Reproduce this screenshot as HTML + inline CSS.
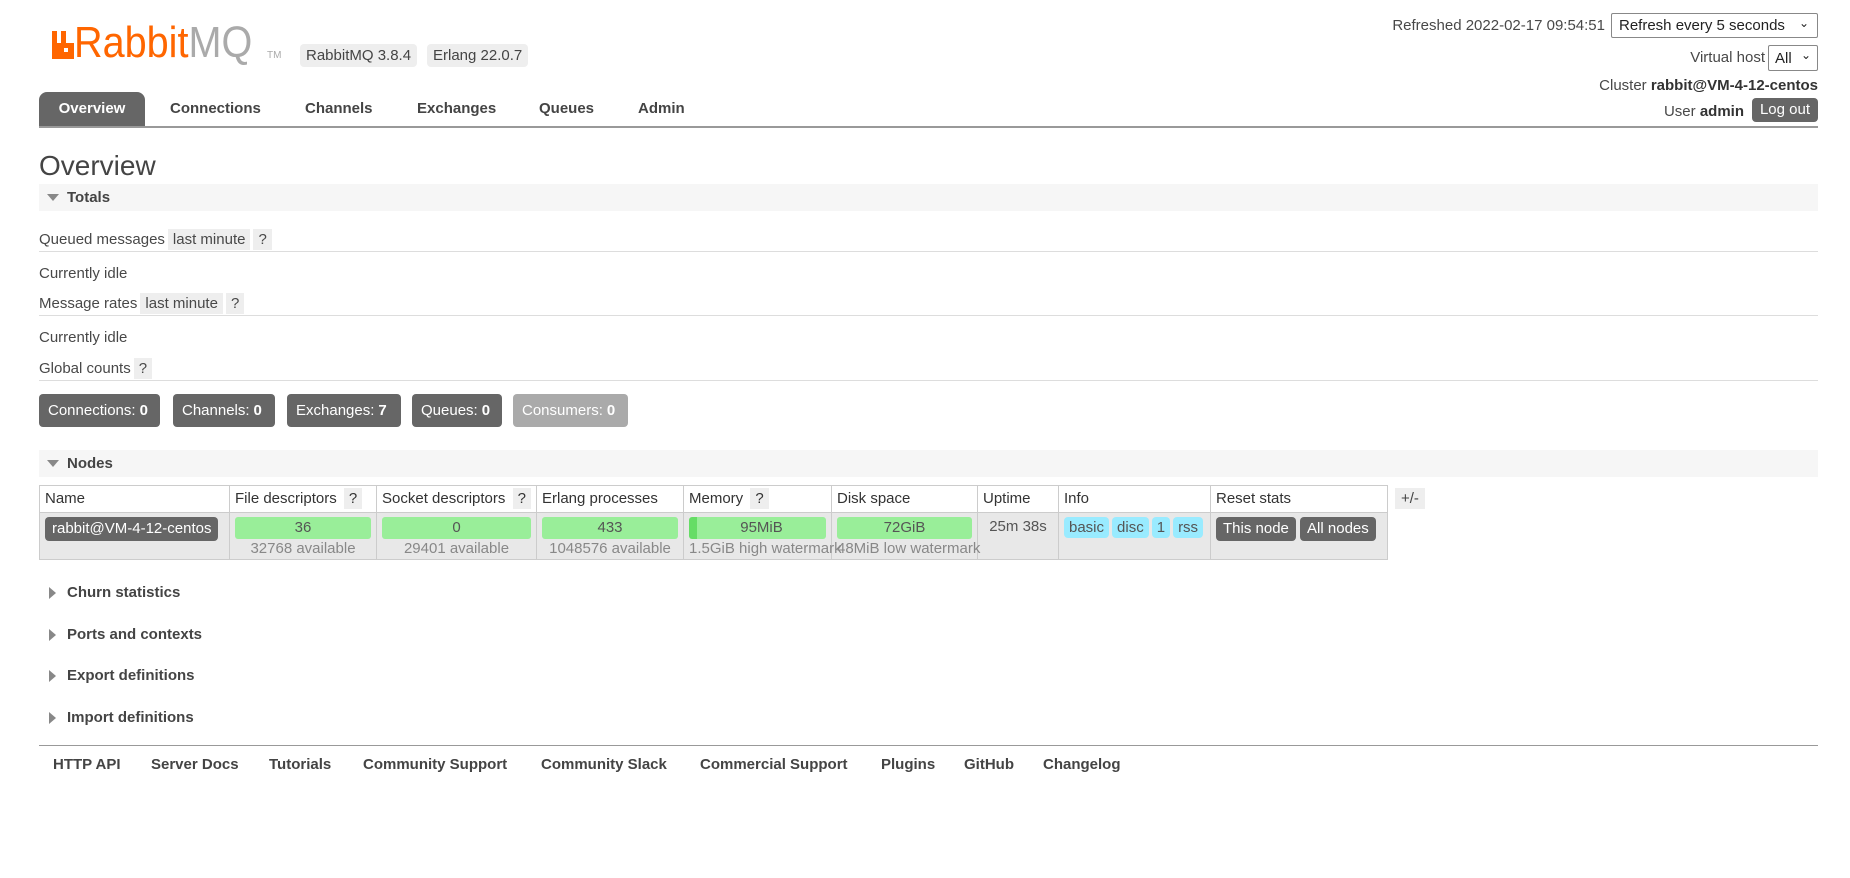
<!DOCTYPE html>
<html><head><meta charset="utf-8"><style>
*{box-sizing:border-box}
body{margin:0;width:1850px;height:878px;background:#fff;font-family:"Liberation Sans",sans-serif;font-size:15px;color:#484848;position:relative;overflow:hidden}
.a{position:absolute;white-space:nowrap}
.badge{background:#eee;border-radius:4px;padding:3px 6px;font-size:15px;color:#444}
.tab{position:absolute;top:92px;height:34px;line-height:34px;font-weight:bold;color:#444;font-size:15px}
.bar{position:absolute;left:39px;width:1779px;background:#f6f6f6;height:27px;line-height:27px;font-weight:bold;font-size:15px;color:#444;padding-left:28px}
.bar:before{content:"";position:absolute;left:8px;top:10px;border-left:6px solid transparent;border-right:6px solid transparent;border-top:7px solid #888}
.sec{position:absolute;left:39px;font-weight:bold;font-size:15px;color:#444;padding-left:28px}
.sec:before{content:"";position:absolute;left:10px;top:3px;border-top:6px solid transparent;border-bottom:6px solid transparent;border-left:7px solid #888}
.hl{position:absolute;left:39px;width:1779px;height:1px;background:#ddd}
.q{background:#eee;padding:2px 5px;margin-left:3px}
.cnt{position:absolute;top:394px;height:33px;line-height:33px;background:#666;color:#fff;border-radius:4px;padding:0 9px;font-size:15px}
.cnt b{margin-left:4px}
table{position:absolute;left:39px;top:485px;width:1348px;border-collapse:collapse;font-size:15px;table-layout:fixed}
td,th{border:1px solid #ccc;padding:0 5px;text-align:left;font-weight:normal;vertical-align:top;white-space:nowrap;overflow:visible}
th{height:26px;line-height:26px;background:#fff;color:#333}
td{background:#e8e8e8;height:47px;text-align:center;color:#555}
.g{background:#99ee99;border-radius:3px;height:22px;line-height:22px;margin-top:4px;color:#555}
.sub{color:#888;font-size:15px;line-height:19px;white-space:nowrap}
.pill{display:inline-block;background:#99ebff;border-radius:4px;padding:0 5px;height:21px;line-height:21px;color:#555;margin-right:3px}
.btn{display:inline-block;background:#666;color:#fff;border-radius:4px;padding:0 7px;height:24px;line-height:24px;margin-top:4px}
.foot{position:absolute;top:756px;font-weight:bold;color:#444;font-size:15px}
</style></head><body>
<div class="a" style="left:52px;top:31px;width:20px;height:26px">
<svg width="22" height="28" viewBox="0 0 22 28"><path d="M0 0h5v12h4V0h5v12h8v16H0z" fill="#f60"/><rect x="12" y="17" width="4" height="4" fill="#fff"/></svg></div>
<div class="a" style="left:74px;top:18px;font-size:44px;color:#f60;font-weight:300;transform:scaleX(0.9);transform-origin:left">Rabbit<span style="color:#aaa">MQ</span></div>
<div class="a" style="left:267px;top:50px;font-size:10px;color:#aaa">TM</div>
<div class="a badge" style="left:300px;top:44px">RabbitMQ 3.8.4</div>
<div class="a badge" style="left:427px;top:44px">Erlang 22.0.7</div>

<div class="tab" style="left:39px;width:106px;background:#666;color:#fff;border-radius:8px 8px 0 0;text-align:center">Overview</div>
<div class="tab" style="left:170px">Connections</div>
<div class="tab" style="left:305px">Channels</div>
<div class="tab" style="left:417px">Exchanges</div>
<div class="tab" style="left:539px">Queues</div>
<div class="tab" style="left:638px">Admin</div>
<div class="a" style="left:39px;top:126px;width:1779px;height:2px;background:#999"></div>

<div class="a" style="right:245px;top:17px">Refreshed 2022-02-17 09:54:51</div>
<div class="a" style="left:1611px;top:13px;width:207px;height:25px;border:1px solid #888;border-radius:2px;padding:3px 7px;color:#222">Refresh every 5 seconds<span style="position:absolute;right:8px;top:2px;font-size:12px">&#8964;</span></div>
<div class="a" style="right:85px;top:49px">Virtual host</div>
<div class="a" style="left:1768px;top:45px;width:50px;height:26px;border:1px solid #888;border-radius:2px;padding:4px 6px;color:#222">All<span style="position:absolute;right:6px;top:2px;font-size:12px">&#8964;</span></div>
<div class="a" style="right:32px;top:77px">Cluster <b style="color:#333">rabbit@VM-4-12-centos</b></div>
<div class="a" style="right:106px;top:103px">User <b style="color:#333">admin</b></div>
<div class="a" style="left:1752px;top:98px;width:66px;height:24px;line-height:24px;background:#666;color:#fff;border-radius:4px;text-align:center">Log out</div>

<div class="a" style="left:39px;top:150px;font-size:28px;color:#444">Overview</div>
<div class="bar" style="top:184px">Totals</div>
<div class="a" style="left:39px;top:231px">Queued messages<span class="q">last minute</span><span class="q">?</span></div>
<div class="hl" style="top:251px"></div>
<div class="a" style="left:39px;top:265px">Currently idle</div>
<div class="a" style="left:39px;top:295px">Message rates<span class="q">last minute</span><span class="q">?</span></div>
<div class="hl" style="top:315px"></div>
<div class="a" style="left:39px;top:329px">Currently idle</div>
<div class="a" style="left:39px;top:360px">Global counts<span class="q">?</span></div>
<div class="hl" style="top:380px"></div>
<div class="cnt" style="left:39px;width:121px">Connections:<b>0</b></div>
<div class="cnt" style="left:173px;width:102px">Channels:<b>0</b></div>
<div class="cnt" style="left:287px;width:114px">Exchanges:<b>7</b></div>
<div class="cnt" style="left:412px;width:90px">Queues:<b>0</b></div>
<div class="cnt" style="left:513px;width:115px;background:#aaa">Consumers:<b>0</b></div>

<div class="bar" style="top:450px">Nodes</div>
<table>
<colgroup><col style="width:190px"><col style="width:147px"><col style="width:160px"><col style="width:147px"><col style="width:148px"><col style="width:146px"><col style="width:81px"><col style="width:152px"><col style="width:177px"></colgroup>
<tr><th>Name</th><th>File descriptors <span class="q">?</span></th><th>Socket descriptors <span class="q">?</span></th><th>Erlang processes</th><th>Memory <span class="q">?</span></th><th>Disk space</th><th>Uptime</th><th>Info</th><th>Reset stats</th></tr>
<tr><td style="text-align:left"><span class="btn" style="height:24px">rabbit@VM-4-12-centos</span></td>
<td><div class="g">36</div><div class="sub">32768 available</div></td>
<td><div class="g">0</div><div class="sub">29401 available</div></td>
<td><div class="g">433</div><div class="sub">1048576 available</div></td>
<td style="text-align:left"><div class="g" style="text-align:center;border-left:8px solid #66dd66">95MiB</div><div class="sub">1.5GiB high watermark</div></td>
<td style="text-align:left"><div class="g" style="text-align:center">72GiB</div><div class="sub">48MiB low watermark</div></td>
<td style="padding-top:5px">25m 38s</td>
<td style="text-align:left;padding-top:4px"><span class="pill">basic</span><span class="pill">disc</span><span class="pill">1</span><span class="pill">rss</span></td>
<td style="text-align:left"><span class="btn">This node</span> <span class="btn">All nodes</span></td></tr>
</table>
<div class="a" style="left:1395px;top:488px;background:#eee;padding:2px 6px;color:#444">+/-</div>

<div class="sec" style="top:584px">Churn statistics</div>
<div class="sec" style="top:626px">Ports and contexts</div>
<div class="sec" style="top:667px">Export definitions</div>
<div class="sec" style="top:709px">Import definitions</div>
<div class="a" style="left:39px;top:745px;width:1779px;height:1px;background:#999"></div>
<div class="foot" style="left:53px">HTTP API</div>
<div class="foot" style="left:151px">Server Docs</div>
<div class="foot" style="left:269px">Tutorials</div>
<div class="foot" style="left:363px">Community Support</div>
<div class="foot" style="left:541px">Community Slack</div>
<div class="foot" style="left:700px">Commercial Support</div>
<div class="foot" style="left:881px">Plugins</div>
<div class="foot" style="left:964px">GitHub</div>
<div class="foot" style="left:1043px">Changelog</div>
</body></html>
